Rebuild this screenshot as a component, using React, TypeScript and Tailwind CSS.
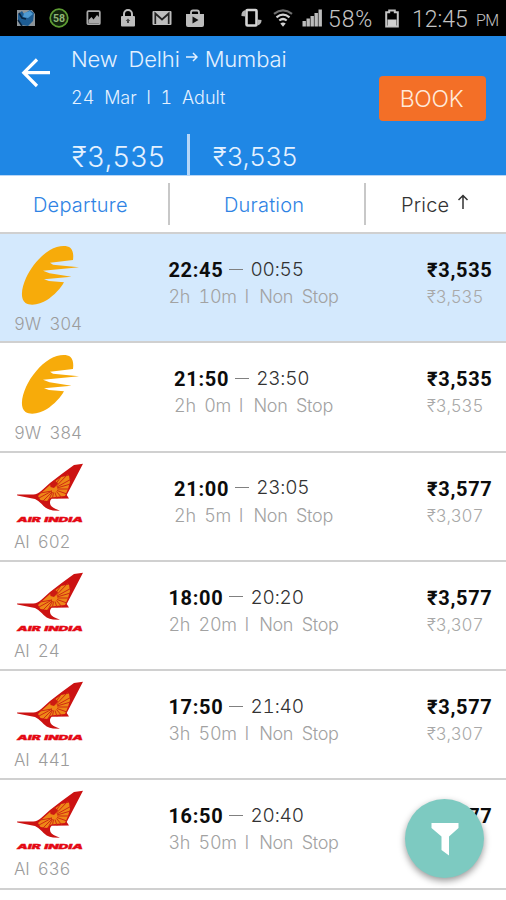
import React from 'react';

type Flight = {
  airline: 'jet' | 'ai';
  code: string;
  depart: string;
  arrive: string;
  duration: string;
  price: string;
  oldPrice: string;
  selected?: boolean;
};

const flights: Flight[] = [
  { airline: 'jet', code: '9W 304', depart: '22:45', arrive: '00:55', duration: '2h 10m', price: '₹3,535', oldPrice: '₹3,535', selected: true },
  { airline: 'jet', code: '9W 384', depart: '21:50', arrive: '23:50', duration: '2h 0m', price: '₹3,535', oldPrice: '₹3,535' },
  { airline: 'ai', code: 'AI 602', depart: '21:00', arrive: '23:05', duration: '2h 5m', price: '₹3,577', oldPrice: '₹3,307' },
  { airline: 'ai', code: 'AI 24', depart: '18:00', arrive: '20:20', duration: '2h 20m', price: '₹3,577', oldPrice: '₹3,307' },
  { airline: 'ai', code: 'AI 441', depart: '17:50', arrive: '21:40', duration: '3h 50m', price: '₹3,577', oldPrice: '₹3,307' },
  { airline: 'ai', code: 'AI 636', depart: '16:50', arrive: '20:40', duration: '3h 50m', price: '₹3,577', oldPrice: '₹3,307' },
];

function StatusBar() {
  return (
    <div className="flex h-9 items-center bg-black text-[#c4c4c4]">
      <svg className="ml-4 h-5 w-5" viewBox="0 0 20 20">
        <path d="M1 2h15l3 4v12H1z" fill="#8d9499" />
        <path d="M2 6l4-3 2 3 6-4 4 3-1 8-5 5-6-1-4-5z" fill="#1d5c93" />
        <path d="M8 5l6-2 3 3-5 4-5-1z" fill="#4f9ad2" />
        <path d="M2 12l4 6M3 5l3 5 4 1" stroke="#07233f" strokeWidth="1.5" fill="none" />
      </svg>
      <svg className="ml-[13px] h-5 w-5" viewBox="0 0 20 20">
        <circle cx="10" cy="10" r="8.8" fill="#10220c" stroke="#5d9c33" strokeWidth="1.7" />
        <text x="10" y="13.7" textAnchor="middle" fontSize="10.5" fontWeight="700" fontFamily="Roboto, sans-serif" fill="#8fb678">58</text>
      </svg>
      <svg className="ml-[17px] h-4 w-4" viewBox="0 0 16 16">
        <rect x="1.4" y="1.2" width="12.4" height="13" rx="1" fill="none" stroke="#a9a9a9" strokeWidth="1.8" />
        <path d="M2.5 13V10l3-3 2 2.5L11 5l2 2v6z" fill="#a9a9a9" />
      </svg>
      <svg className="ml-[18px] h-[18px] w-[16px]" viewBox="0 0 16 18">
        <path d="M4 8V5a4 4 0 0 1 8 0v3" fill="none" stroke="#bdbdbd" strokeWidth="2" />
        <rect x="1" y="7" width="14" height="10.5" rx="1" fill="#bdbdbd" />
        <path d="M8 9.6l2.3 2.3H9v2H7v-2H5.700z" fill="#444" />
      </svg>
      <svg className="ml-[16px] h-4 w-5" viewBox="0 0 20 16">
        <rect x="0.500" y="1" width="19" height="14" rx="1" fill="#bdbdbd" />
        <path d="M3.300 14V3.500L10 9.500l6.700-6V14" fill="none" stroke="#222" strokeWidth="1.700" />
      </svg>
      <svg className="ml-[13px] h-[19px] w-5" viewBox="0 0 20 19">
        <path d="M6 6V3.500Q6 1.500 8 1.500h4q2 0 2 2V6" fill="none" stroke="#bdbdbd" strokeWidth="1.800" />
        <path d="M1 5h18v11q0 2-2 2H3q-2 0-2-2z" fill="#bdbdbd" />
        <path d="M7.500 7.500v7l6-3.500z" fill="#111" />
      </svg>
      <svg className="ml-[36px] h-5 w-[21px]" viewBox="0 0 21 20">
        <rect x="5.500" y="2" width="10" height="15.500" rx="1" fill="none" stroke="#d4d4d4" strokeWidth="2.600" />
        <path d="M4.500 2Q0 3 .5 8L4.500 8.500zM16.500 11.500l4 .5q.3 4-4 5.500z" fill="#b5b5b5" />
      </svg>
      <svg className="ml-[11px] h-5 w-5" viewBox="0 0 20 20" fill="none" strokeWidth="2.200">
        <path d="M1 5.800Q10-1 19 5.800" stroke="#6f6f6f" />
        <path d="M3.500 9.300Q10 4 16.500 9.300" stroke="#d2d2d2" />
        <path d="M6.300 12.500Q10 9.500 13.700 12.500" stroke="#d2d2d2" />
        <path d="M7.300 15.500q2.700-2 5.400 0L10 18.800z" fill="#d2d2d2" />
      </svg>
      <svg className="ml-[9px] h-[18px] w-5" viewBox="0 0 20 18" fill="#bcbcbc">
        <rect x="0.500" y="12" width="3.400" height="5.500" />
        <rect x="4.500" y="9.500" width="3.400" height="8" />
        <rect x="8.500" y="7" width="3.400" height="10.500" />
        <rect x="12.500" y="4" width="3.400" height="13.500" />
        <rect x="16.500" y="0.500" width="3.400" height="17" />
      </svg>
      <span className="ml-[6px] mt-[3px] w-[46px] whitespace-nowrap font-['Roboto',sans-serif] text-[23px] font-light leading-9 tracking-[0.900px]">58%</span>
      <svg className="ml-[11px] h-[19px] w-[14px]" viewBox="0 0 14 19">
        <path d="M1.200 3.200h3V1.500h5.600v1.700h3v14.300H1.200z" fill="none" stroke="#c4c4c4" strokeWidth="2" />
        <path d="M2.500 10.500h9V17h-9z" fill="#d0d0d0" />
      </svg>
      <span className="ml-[13px] mt-[3px] whitespace-nowrap font-['Roboto',sans-serif] text-[23px] font-light leading-9">12:45</span>
      <span className="ml-[8px] mt-[5px] whitespace-nowrap font-['Roboto',sans-serif] text-[16px] font-light tracking-[-0.5px]">PM</span>
    </div>
  );
}

function JetLogo() {
  return (
    <svg className="ml-[21px] mt-[12px] h-[60px] w-[60px]" viewBox="0 0 60 60">
      <path
        d="M49.500 2C52.500 5 52.500 10 52 14L29 16.700 32 18.700 58 21.300 22 24.700 28.500 27.300 50.500 30.700 23 33.300 28 35 43 36.300C40 42 33 49.500 26 54 20 58 10 60.500 4.500 57 -1.500 52 1 41 5 32 10 21 19 10 29 4 36 0 45-1.500 49.500 2Z"
        fill="#f7ab0a"
      />
    </svg>
  );
}

function AirIndiaLogo() {
  return (
    <svg className="ml-[16px] mt-[10px] h-[60px] w-[68px]" viewBox="0 0 68 60">
      <path
        d="M67 .8L58 2 45.700 11 34 20 25.700 27.500Q21 31.700 17 31.500L1 31.500 1.300 32.600 10 34.300 19 36Q23 38 25.700 41 30 46.500 37 47.500L44 47.700Q36 45 34.500 42 33 38 35.700 35.800L53 35.500 50.700 32 58 18Z"
        fill="#cc1212"
      />
      <path d="M25 30L34 22 45 14 53 12.500 54 19 52 26 49 33 35 34.500 31 38 24.500 37 22 33Z" fill="#ee8717" />
      <path
        d="M36 28L24 30M36 28L23 35M36 29L27 38M36.500 29L32 38M37.500 29.500L36.500 35M39 29.500L41 35.500M40.500 28.500L46 35M41 27.500L51 31M41.500 26L53 26M41 25L54.500 21M41 24L54.500 16.500M40 23.500L52 11M38.500 23L45 13.500M37 24L39 17"
        fill="none"
        stroke="#cf2a12"
        strokeWidth="1"
      />
      <path d="M34 20.500L39.500 18 42 20.500 38 25 34.500 24Z" fill="#cc1a12" />
      <text
        x="1"
        y="58.800"
        textLength="66"
        lengthAdjust="spacingAndGlyphs"
        fontFamily="Inter, sans-serif"
        fontWeight="900"
        fontStyle="italic"
        fontSize="6.200"
        fill="#e40814"
        stroke="#e40814"
        strokeWidth="0.300"
      >
        AIR INDIA
      </text>
    </svg>
  );
}

function FlightRow({ flight }: { flight: Flight }) {
  return (
    <div
      className={
        'flex h-[109.300px] border-b-2 border-[#d0d0d0] tabular-nums ' + (flight.selected ? 'bg-[#d4e9fd]' : 'bg-white')
      }
    >
      <div className="w-[140px] shrink-0">
        {flight.airline === 'jet' ? <JetLogo /> : <AirIndiaLogo />}
        <div className={'ml-[14px] whitespace-nowrap text-[17px] font-light leading-[20px] tracking-[-0.200px] text-[#9c9c9c] [word-spacing:4px] ' + (flight.airline === 'jet' ? 'mt-[8px]' : 'mt-[9px]')}>
          {flight.code}
        </div>
      </div>
      <div className="flex w-[227px] shrink-0 justify-center">
        <div className="pt-[24px]">
          <div className="flex h-[24px] items-center whitespace-nowrap">
            <span className="font-['Roboto',sans-serif] text-[20px] font-bold tracking-[0.700px] text-[#0c0c0c]">{flight.depart}</span>
            <span className="ml-[6px] mr-[7px] h-px w-[14px] -translate-y-px bg-[#808080]" />
            <span className="text-[19px] font-light tracking-[-0.200px] text-[#333]">{flight.arrive}</span>
          </div>
          <div className="mt-[4px] h-[22px] whitespace-nowrap text-[18px] font-light leading-[22px] tracking-[-0.300px] text-[#a2a2a2] [word-spacing:4px]">
            {flight.duration}<span className="ml-[8px] mr-[2px]">l</span> Non Stop
          </div>
        </div>
      </div>
      <div className="ml-[60px] pt-[24px]">
        <div className="h-[24px] whitespace-nowrap font-['Roboto',sans-serif] text-[20px] font-bold leading-[24px] tracking-[0.700px] text-[#0c0c0c]">{flight.price}</div>
        <div className="mt-[4px] h-[22px] whitespace-nowrap text-[17px] font-light leading-[22px] tracking-[-0.200px] text-[#a8a8a8]">{flight.oldPrice}</div>
      </div>
    </div>
  );
}

export default function App() {
  return (
    <div className="relative h-[900px] w-[506px] overflow-hidden bg-white font-['Inter','Liberation_Sans',sans-serif]">
      <StatusBar />
      <header className="flex h-[140px] flex-col border-b border-[#b9d6f6] bg-[#1f87e5] text-[#e4f1ff]">
        <div className="flex h-[98px]">
          <svg className="ml-[21px] mt-[22px] h-[30px] w-[30px]" viewBox="0 0 30 30" fill="none" stroke="#fff" strokeWidth="3.200">
            <path d="M29 14.700H3M16 1.500L2.800 14.700 16 28" />
          </svg>
          <div className="ml-[20px] w-[308px] pt-[9px]">
            <div className="flex h-[28px] items-center whitespace-nowrap text-[22px] font-light tracking-[-0.150px]">
              <span className="[word-spacing:5px]">New Delhi</span>
              <svg className="ml-[6px] mr-[7px] h-[10px] w-[12px] -translate-y-[2px]" viewBox="0 0 12 10" fill="none" stroke="#e4f1ff" strokeWidth="1.500">
                <path d="M0 5h10.500M7 1l4 4-4 4" />
              </svg>
              <span>Mumbai</span>
            </div>
            <div className="mt-[13px] h-[24px] whitespace-nowrap text-[18px] font-light tabular-nums leading-[24px] [word-spacing:5px]">24 Mar l 1 Adult</div>
          </div>
          <button className="mt-[40px] flex h-[45px] w-[107px] items-center justify-center rounded-[4px] bg-[#f36f27] pr-[2px] pt-[2px] text-[23px] font-light tracking-[-0.300px] text-[#ffe9d9]">
            BOOK
          </button>
        </div>
        <div className="flex h-[41px] items-center">
          <span className="ml-[72px] mt-[4px] w-[115px] whitespace-nowrap text-[28px] font-light tracking-[0.800px]">₹3,535</span>
          <span className="h-full w-[3px] bg-[#b5d6f8]" />
          <span className="ml-[23px] mt-[4px] whitespace-nowrap text-[26px] font-light tracking-[0.400px]">₹3,535</span>
        </div>
      </header>
      <nav className="flex h-[58px] items-center border-b-2 border-[#d0d0d0] bg-white pb-px text-[20px] font-light text-[#2f83e4]">
        <span className="w-[168px] pl-[33px] pt-[2px] tracking-[0.200px]">Departure</span>
        <span className="h-[42px] w-[2px] bg-[#c8c8c8]" />
        <span className="w-[194px] pl-[54px] pt-[2px] tracking-[0.200px]">Duration</span>
        <span className="h-[42px] w-[2px] bg-[#c8c8c8]" />
        <span className="pl-[35px] pt-[2px] tracking-[0.200px] text-[#333]">Price</span>
        <svg className="ml-[8px] h-[16px] w-[12px] -translate-y-[2px]" viewBox="0 0 12 16" fill="none" stroke="#333" strokeWidth="1.500">
          <path d="M6 15V2M1.500 6L6 1.500 10.500 6" />
        </svg>
      </nav>
      <main>
        {flights.map((f) => (
          <FlightRow key={f.code} flight={f} />
        ))}
      </main>
      <button className="absolute left-[405px] top-[799px] flex h-[79px] w-[79px] items-center justify-center rounded-full bg-[#7dcac1] shadow-[0_3px_7px_rgba(0,0,0,0.4)]">
        <svg className="h-[34px] w-[28px]" viewBox="0 0 28 34" fill="#fff">
          <path d="M0.500 1h27v5L18 14.500V33.500L10.500 28V14.500L.5 6z" />
        </svg>
      </button>
    </div>
  );
}
